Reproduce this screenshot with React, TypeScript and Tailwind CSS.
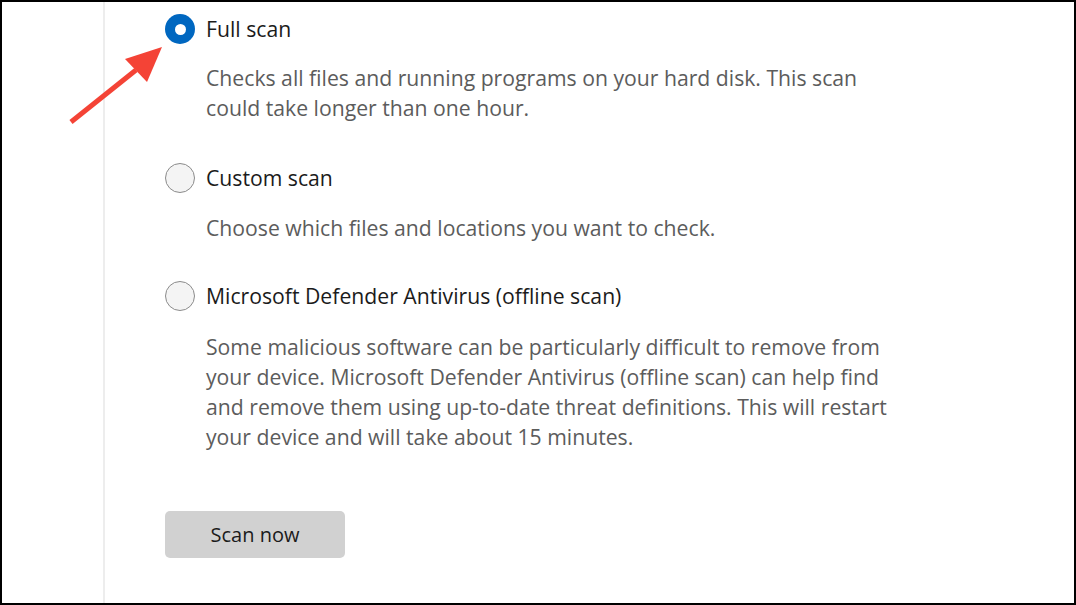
const FONT = "font-['Segoe_UI','Open_Sans','Noto_Sans',sans-serif]"

interface Option {
  label: string
  lines: string[]
  checked?: boolean
}

const OPTIONS: Option[] = [
  {
    label: 'Full scan',
    checked: true,
    lines: [
      'Checks all files and running programs on your hard disk. This scan',
      'could take longer than one hour.',
    ],
  },
  {
    label: 'Custom scan',
    lines: ['Choose which files and locations you want to check.'],
  },
  {
    label: 'Microsoft Defender Antivirus (offline scan)',
    lines: [
      'Some malicious software can be particularly difficult to remove from',
      'your device. Microsoft Defender Antivirus (offline scan) can help find',
      'and remove them using up-to-date threat definitions. This will restart',
      'your device and will take about 15 minutes.',
    ],
  },
]

function Radio({ checked }: { checked?: boolean }) {
  if (checked) {
    return (
      <div className="w-[30px] h-[30px] rounded-full bg-[#0067c0] flex items-center justify-center shrink-0">
        <div className="w-[11px] h-[11px] rounded-full bg-white" />
      </div>
    )
  }
  return (
    <div className="w-[30px] h-[30px] rounded-full border border-[#8b8b8b] bg-[#f4f4f4] shrink-0" />
  )
}

export default function App() {
  // top margins between blocks, taken from the screenshot
  const rowGap = ['mt-0', 'mt-[40px]', 'mt-[38px]']
  const descGap = ['mt-[19px]', 'mt-[20px]', 'mt-[21px]']

  return (
    <div
      className={`relative w-[1076px] h-[605px] bg-white border-2 border-black flex overflow-hidden ${FONT}`}
    >
      {/* left gutter */}
      <div className="w-[101px] shrink-0" />

      {/* content */}
      <div className="flex-1 border-l-2 border-[#ededed] pl-[60px] pt-[12px]">
        {OPTIONS.map((opt, i) => (
          <div key={opt.label} className={rowGap[i]}>
            <div className="flex items-center gap-[11px] h-[30px]">
              <Radio checked={opt.checked} />
              <span className="text-[21.2px] text-[#1b1b1b] whitespace-nowrap">
                {opt.label}
              </span>
            </div>
            <div
              className={`${descGap[i]} ml-[41px] text-[21.2px] leading-[30px] text-[#5c5c5c] whitespace-nowrap`}
            >
              {opt.lines.map((line) => (
                <div key={line}>{line}</div>
              ))}
            </div>
          </div>
        ))}

        <button className="mt-[59px] w-[180px] h-[47px] rounded-[5px] bg-[#d1d1d1] text-[20px] text-[#1b1b1b] flex items-center justify-center">
          Scan now
        </button>
      </div>

      {/* annotation arrow */}
      <svg
        className="absolute left-0 top-0 pointer-events-none"
        width="1076"
        height="605"
        viewBox="0 0 1076 605"
      >
        <line x1="69" y1="120" x2="134" y2="68" stroke="#f44336" strokeWidth="5" />
        <polygon points="160,45 123,57 145,80" fill="#f44336" />
      </svg>
    </div>
  )
}
